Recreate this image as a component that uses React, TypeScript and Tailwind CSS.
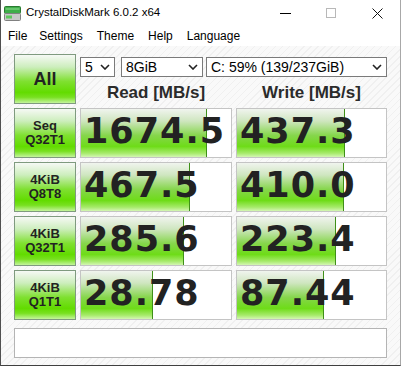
import React from 'react';

type Row = { l1: string; l2: string; read: string; write: string };

const rows: Row[] = [
  { l1: 'Seq', l2: 'Q32T1', read: '1674.5', write: '437.3' },
  { l1: '4KiB', l2: 'Q8T8', read: '467.5', write: '410.0' },
  { l1: '4KiB', l2: 'Q32T1', read: '285.6', write: '223.4' },
  { l1: '4KiB', l2: 'Q1T1', read: '28.78', write: '87.44' },
];

// log scale, like the original meter
const barWidth = (v: string) => Math.round(27.4 + 30.6 * Math.log10(parseFloat(v)));

function Chevron() {
  return (
    <svg width="10" height="6" viewBox="0 0 10 6" className="shrink-0">
      <path d="M1 1 L5 5 L9 1" fill="none" stroke="#222" strokeWidth="1.6" />
    </svg>
  );
}

function Select({ text, className }: { text: string; className: string }) {
  return (
    <div
      className={`flex h-[20px] items-center justify-between border border-[#7a7a7a] bg-white pl-[4px] pr-[4px] text-[14px] leading-none text-black ${className}`}
    >
      <span>{text}</span>
      <Chevron />
    </div>
  );
}

function Meter({ value }: { value: string }) {
  return (
    <div className="relative h-[50px] overflow-hidden border border-[#c4c4c4] bg-white">
      <div
        className="absolute inset-y-0 left-0 border-r border-[#3f8f18] bg-[linear-gradient(to_bottom,#f0f4ee_0%,#cfe6c0_25%,#86d64c_55%,#6edc18_78%,#a6ea6a_92%,#d4f6b4_100%)]"
        style={{ width: barWidth(value) }}
      />
      <div className="relative flex h-full items-center pb-[4px] pl-[3px] font-['DejaVu_Sans'] text-[35px] font-bold tracking-[1px] text-[#222]">
        {value}
      </div>
    </div>
  );
}

const greenBox =
  'border border-[#7f9a7f] bg-[linear-gradient(to_bottom,#f6f9f5_0%,#cdeebd_25%,#7fe030_55%,#62dc00_78%,#78e020_88%,#c4f49c_100%)]';

export default function App() {
  return (
    <div className="h-[367px] w-[402px] bg-white font-['Liberation_Sans',sans-serif]">
      <div className="flex h-[366px] w-[401px] flex-col border-x border-b border-l-[#505050] border-r-[#a8a8a8] border-b-[#404040]">
        {/* title bar */}
        <div className="flex h-[26px] items-center bg-white">
          <svg width="17" height="15" viewBox="0 0 17 15" className="ml-[3px]">
            <rect x="0.5" y="0.5" width="16" height="7" rx="1" fill="#3fae4a" stroke="#2a7a30" />
            <rect x="1.5" y="2.5" width="14" height="1" fill="#8fdc8f" />
            <rect x="0.5" y="7.5" width="16" height="7" rx="1" fill="#c8c8c8" stroke="#808080" />
            <rect x="2" y="9.5" width="6" height="3" fill="#5cc85c" />
          </svg>
          <span className="ml-[5px] text-[11.5px] text-black">CrystalDiskMark 6.0.2 x64</span>
          <div className="ml-auto flex items-center">
            <div className="mr-[35px] h-px w-[11px] bg-black" />
            <div className="mr-[36px] h-[10px] w-[10px] border border-[#b8b8b8]" />
            <svg width="11" height="11" viewBox="0 0 11 11" className="mr-[17px]">
              <path d="M0.5 0.5 L10.5 10.5 M10.5 0.5 L0.5 10.5" stroke="#111" strokeWidth="1" />
            </svg>
          </div>
        </div>

        {/* menu */}
        <div className="flex h-[20px] items-center bg-white text-[12px] text-black">
          <span className="ml-[7px]">File</span>
          <span className="ml-[12px]">Settings</span>
          <span className="ml-[14px]">Theme</span>
          <span className="ml-[14px]">Help</span>
          <span className="ml-[14px]">Language</span>
        </div>

        {/* content */}
        <div className="flex-1 bg-[repeating-linear-gradient(135deg,#f9f9f9_0px,#f9f9f9_4px,#f0f0f0_4px,#f0f0f0_5px)] pl-[13px] pt-[8px]">
          <div className="grid grid-cols-[62px_152px_151px] gap-[4px]">
            <div className={`flex h-[50px] items-center justify-center ${greenBox}`}>
              <span className="text-[18px] font-bold text-[#222]">All</span>
            </div>
            <div className="col-span-2 flex h-[50px] flex-col">
              <div className="mt-[3px] flex">
                <Select text="5" className="w-[35px]" />
                <Select text="8GiB" className="ml-[6px] w-[82px]" />
                <Select text="C: 59% (139/237GiB)" className="ml-[3px] w-[181px]" />
              </div>
              <div className="grid flex-1 grid-cols-[152px_151px] gap-[4px] text-[17px] font-bold text-[#2b2b2b]">
                <div className="flex items-center justify-center pt-[3px]">Read [MB/s]</div>
                <div className="flex items-center justify-center pt-[3px]">Write [MB/s]</div>
              </div>
            </div>

            {rows.map((r, i) => (
              <React.Fragment key={i}>
                <div
                  className={`flex h-[50px] flex-col items-center justify-center text-[13px] font-bold leading-[14px] text-[#222] ${greenBox}`}
                >
                  <span>{r.l1}</span>
                  <span>{r.l2}</span>
                </div>
                <Meter value={r.read} />
                <Meter value={r.write} />
              </React.Fragment>
            ))}

            <div className="col-span-3 mt-[4px] h-[30px] border border-[#b4b4b4] bg-white" />
          </div>
        </div>
      </div>
    </div>
  );
}
